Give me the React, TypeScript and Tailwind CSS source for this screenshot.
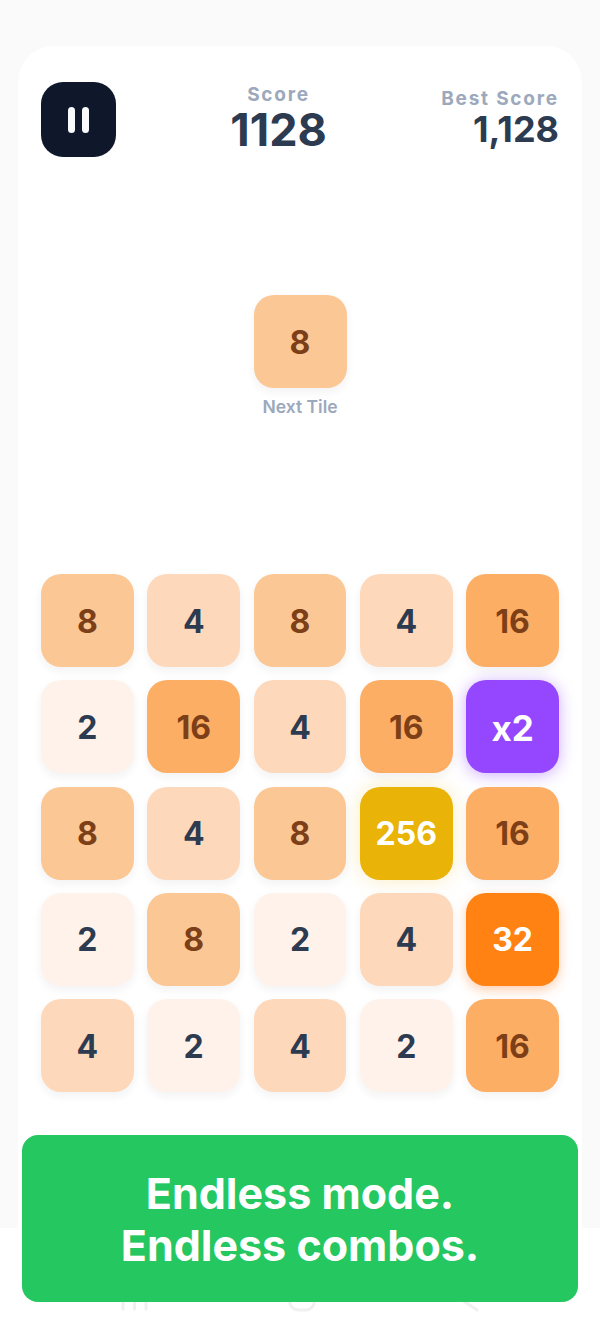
const tileStyles: Record<string, string> = {
  '2': 'bg-[#fff2ea] text-[32px] text-[#2d3b50] shadow-[0_4px_10px_rgba(30,41,59,0.06)]',
  '4': 'bg-[#fed8bb] text-[32px] text-[#2d3b50] shadow-[0_4px_10px_rgba(30,41,59,0.06)]',
  '8': 'bg-[#fbc794] text-[32px] text-[#7c3f17] shadow-[0_4px_10px_rgba(30,41,59,0.06)]',
  '16': 'bg-[#fdae65] text-[32px] text-[#7c3f17] shadow-[0_4px_10px_rgba(30,41,59,0.06)]',
  '32': 'bg-[#ff8213] text-[32px] text-white shadow-[0_4px_12px_rgba(249,115,22,0.35)]',
  '256': 'bg-[#e9b308] text-[32px] text-white shadow-[0_0_20px_rgba(234,179,8,0.25)]',
  x2: 'bg-[#9546ff] text-[35px] text-white shadow-[0_2px_16px_rgba(147,70,255,0.45)]',
};

const board = [
  ['8', '4', '8', '4', '16'],
  ['2', '16', '4', '16', 'x2'],
  ['8', '4', '8', '256', '16'],
  ['2', '8', '2', '4', '32'],
  ['4', '2', '4', '2', '16'],
];

function Tile({ value }: { value: string }) {
  return (
    <div
      className={`flex h-[93px] items-center justify-center rounded-[20px] pt-[2px] font-bold ${tileStyles[value]}`}
    >
      {value}
    </div>
  );
}

export default function App() {
  return (
    <div className="relative h-[1333px] w-[600px] overflow-hidden bg-white font-['Inter',sans-serif]">
      {/* Page tint behind the game card */}
      <div className="h-[1228px] bg-[#fafafa] pt-[46px]">
        <div className="mx-[18px] h-[1182px] rounded-t-[36px] bg-white px-[23px] pt-[36px]">
          <header className="flex h-[76px] items-start justify-between">
            <button className="flex h-[75px] w-[75px] items-center justify-center gap-[7px] rounded-[22px] bg-[#0f172a]">
              <span className="h-[26px] w-[7px] rounded-full bg-[#f8fafc]" />
              <span className="h-[26px] w-[7px] rounded-full bg-[#f8fafc]" />
            </button>
            <div className="flex flex-col items-center">
              <span className="text-[19px] leading-[26px] font-bold tracking-[1.8px] text-[#9ca8bc]">
                Score
              </span>
              <span className="mt-[-2px] text-[45px] leading-[48px] font-bold text-[#2d3b50]">
                1128
              </span>
            </div>
            <div className="flex flex-col items-end pt-[4px]">
              <span className="text-[19px] leading-[26px] font-bold tracking-[1.8px] text-[#9ca8bc]">
                Best Score
              </span>
              <span className="mt-[-3px] text-[36px] leading-[40px] font-bold text-[#2d3b50]">
                1,128
              </span>
            </div>
          </header>

          <div className="mt-[137px] flex flex-col items-center">
            <div className="w-[93px]">
              <Tile value="8" />
            </div>
            <span className="mt-[8px] text-[17.5px] leading-[22px] font-semibold text-[#9ca8bc]">
              Next Tile
            </span>
          </div>

          <div className="mt-[156px] grid grid-cols-5 gap-x-[13.5px] gap-y-[13.25px]">
            {board.flat().map((value, i) => (
              <Tile key={i} value={value} />
            ))}
          </div>
        </div>
      </div>

      {/* Phone nav buttons, mostly hidden behind the banner */}
      <svg
        className="absolute top-[1280px] left-0"
        width="600"
        height="40"
        viewBox="0 0 600 40"
        fill="none"
        stroke="#f0f0f1"
        strokeWidth="3"
        strokeLinecap="round"
      >
        <path d="M123 4v25M134.500 4v25M146 4v25" />
        <rect x="289.500" y="4" width="25" height="26" rx="9" />
        <path d="M456 16l21 14" />
      </svg>

      {/* Promo banner overlaps the game screen */}
      <div className="absolute top-[1135px] left-[22px] flex h-[167px] w-[556px] items-center justify-center rounded-[16px] bg-[#25c760] text-center text-[43px] leading-[52px] font-bold text-white">
        <p>
          Endless mode.
          <br />
          Endless combos.
        </p>
      </div>
    </div>
  );
}
